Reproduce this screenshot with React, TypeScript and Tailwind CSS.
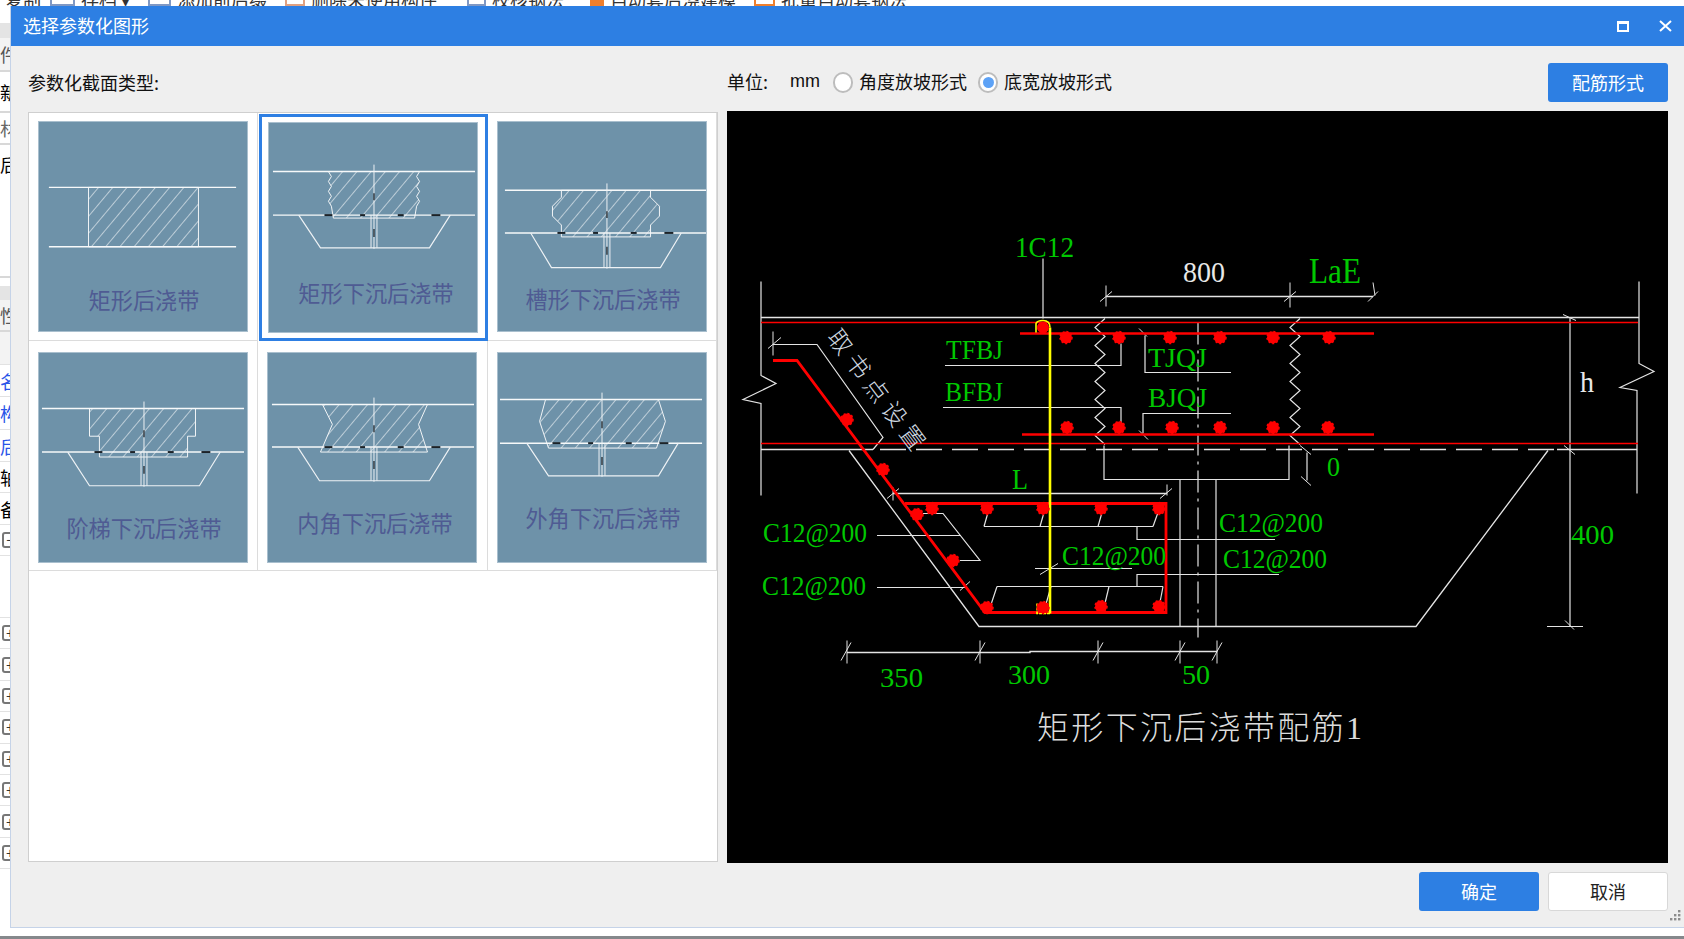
const cjk = "font-['Noto_Sans_CJK_SC',sans-serif]";
const serif = "font-['Liberation_Serif','Noto_Sans_CJK_SC',serif]";

type Thumb = {
  id: string;
  label: string;
  labelX: number;
  labelY: number;
  top: number;
  mid: number;
  cx: number;
  left: number;
  right: number;
  trap?: number[];
  shape: string;
  selected?: boolean;
  row2?: boolean;
};

const thumbs: Thumb[] = [
  { id: 'a', label: '矩形后浇带', labelX: 106, labelY: 181, top: 66, mid: 126, cx: 0, left: 10, right: 199, shape: '50,66 161,66 161,126 50,126' },
  {
    id: 'b', label: '矩形下沉后浇带', labelX: 108, labelY: 173, top: 49, mid: 93, cx: 106, left: 4, right: 208,
    trap: [30, 52, 162, 183, 126], selected: true,
    shape: '60,49 152,49 149,54 152,59 149,64 152,69 149,74 152,79 149,84 147,96 65,96 63,84 60,79 63,74 60,69 63,64 60,59 63,54',
  },
  {
    id: 'c', label: '槽形下沉后浇带', labelX: 106, labelY: 180, top: 69, mid: 112, cx: 110, left: 7, right: 210,
    trap: [33, 54, 164, 185, 147],
    shape: '64,69 154,69 154,76 163,85 163,95 154,104 154,116 64,116 64,104 55,95 55,85 64,76',
  },
  {
    id: 'd', label: '阶梯下沉后浇带', labelX: 106, labelY: 178, top: 56, mid: 100, cx: 106, left: 3, right: 207, row2: true,
    trap: [29, 51, 162, 183, 134],
    shape: '51,56 158,56 158,84 150,84 150,105 61,105 61,84 51,84',
  },
  {
    id: 'e', label: '内角下沉后浇带', labelX: 108, labelY: 173, top: 52, mid: 95, cx: 107, left: 4, right: 208, row2: true,
    trap: [30, 52, 163, 184, 129],
    shape: '55,52 161,52 152,72 161,100 53,100 65,72',
  },
  {
    id: 'f', label: '外角下沉后浇带', labelX: 106, labelY: 168, top: 47, mid: 91, cx: 105, left: 2, right: 206, row2: true,
    trap: [29, 51, 162, 182, 124],
    shape: '48,47 162,47 169,69 160,96 51,96 42,69',
  },
];

function ThumbImage({ t }: { t: Thumb }) {
  const { id, top, mid, cx, left, right, trap } = t;
  return (
    <svg viewBox="0 0 210 211" className="w-[210px] h-[211px] bg-[#6e92a9] border border-[#a9bfce] shrink-0">
      <defs>
        <pattern id={`hatch-${id}`} width="11" height="11" patternUnits="userSpaceOnUse" patternTransform="rotate(40)">
          <line x1="0" y1="0" x2="0" y2="11" stroke="#fff" strokeWidth="1.1" />
        </pattern>
      </defs>
      <polygon points={t.shape} fill={`url(#hatch-${id})`} stroke="#f2f5f7" strokeWidth="1" />
      <line x1={left} y1={top} x2={right} y2={top} stroke="#f7f9fa" strokeWidth="1.5" />
      <line x1={left} y1={mid} x2={right} y2={mid} stroke="#f7f9fa" strokeWidth="1.5" />
      {trap && (
        <>
          <polyline points={`${trap[0]},${mid} ${trap[1]},${trap[4]} ${trap[2]},${trap[4]} ${trap[3]},${mid}`} fill="none" stroke="#eef2f5" strokeWidth="1.2" />
          <line x1={cx} y1={top - 7} x2={cx} y2={trap[4] + 1} stroke="#eef2f5" strokeWidth="1" />
          <line x1={cx - 3} y1={mid} x2={cx - 3} y2={trap[4]} stroke="#eef2f5" strokeWidth="1" />
          <line x1={cx + 3} y1={mid} x2={cx + 3} y2={trap[4]} stroke="#eef2f5" strokeWidth="1" />
          <g stroke="#1b2228" strokeWidth="2">
            <line x1={cx - 50} y1={mid} x2={cx - 42} y2={mid} />
            <line x1={cx - 14} y1={mid} x2={cx - 9} y2={mid} />
            <line x1={cx + 24} y1={mid} x2={cx + 30} y2={mid} />
            <line x1={cx + 58} y1={mid} x2={cx + 67} y2={mid} />
          </g>
          <g stroke="#1b2228" strokeWidth="1.3">
            <line x1={cx} y1={mid - 22} x2={cx} y2={mid - 15} />
            <line x1={cx} y1={mid + 14} x2={cx} y2={mid + 22} />
          </g>
        </>
      )}
      <text x={t.labelX} y={t.labelY + 8} textAnchor="middle" fontSize="22.4" fill="#4f5b93" className={cjk}>
        {t.label}
      </text>
    </svg>
  );
}

function zigzag(x1: number, x2: number, y1: number, y2: number, step: number) {
  const pts: string[] = [];
  let i = 0;
  for (let y = y1; y <= y2; y += step) {
    pts.push(`${i % 2 === 0 ? x2 : x1},${y.toFixed(1)}`);
    i++;
  }
  return pts.join(' ');
}

const ticks = [
  [1106, 285, 1106, 306], [1100, 301, 1112, 291],
  [1290, 282, 1290, 307], [1284, 301, 1296, 291],
  [1373, 282, 1375, 295], [1368, 301, 1378, 291],
  [773, 331, 773, 355], [768, 348, 781, 337],
  [893, 487, 893, 500], [887, 498, 899, 488],
  [1167, 484, 1167, 495], [1160, 498, 1172, 488],
  [847, 640, 847, 663], [841, 660, 851, 642],
  [980, 640, 980, 663], [975, 660, 985, 642],
  [1098, 640, 1098, 663], [1093, 660, 1103, 642],
  [1180, 640, 1180, 663], [1175, 660, 1185, 642],
  [1217, 640, 1217, 663], [1212, 660, 1222, 642],
  [1139, 328, 1147, 336], [1139, 430, 1148, 439],
  [1563, 314, 1576, 320], [1564, 445, 1575, 454],
  [1300, 445, 1311, 454], [1301, 476, 1311, 485],
  [1565, 620, 1574, 629], [960, 590, 970, 581], [1040, 574, 1058, 563],
];

const topDots = [1066, 1119, 1170, 1220, 1273, 1329];
const bottomDots = [1067, 1119, 1172, 1220, 1273, 1328];
const frameDots = [
  [932, 508], [987, 508], [1043, 508], [1101, 508], [1159, 508],
  [847, 419], [883, 469], [917, 514], [953, 560],
  [987, 607], [1043, 607], [1101, 606], [1159, 606],
];

const greenLabels: [string, number, number, number, number][] = [
  ['1C12', 1015, 256, 59, 30],
  ['LaE', 1309, 282, 52, 36],
  ['TFBJ', 946, 358, 57, 28],
  ['BFBJ', 945, 400, 58, 28],
  ['TJQJ', 1148, 366, 59, 28],
  ['BJQJ', 1148, 406, 59, 28],
  ['L', 1012, 488, 16, 30],
  ['0', 1327, 475, 13, 28],
  ['400', 1571, 543, 43, 28],
  ['C12@200', 763, 541, 104, 27],
  ['C12@200', 762, 594, 104, 27],
  ['C12@200', 1062, 564, 104, 27],
  ['C12@200', 1219, 531, 104, 27],
  ['C12@200', 1223, 567, 104, 27],
  ['350', 880, 686, 43, 28],
  ['300', 1008, 683, 42, 28],
  ['50', 1182, 683, 28, 28],
];

function Drawing() {
  return (
    <svg viewBox="727 111 941 751" className="w-full h-full bg-black block">
      <g stroke="#e4e4e4" strokeWidth="1.2" fill="none">
        <line x1="761" y1="317" x2="1639" y2="317" strokeWidth="1.5" />
        <polyline points="761,281 761,375 776,383 743,399 761,403 761,495" />
        <polyline points="1639,281 1639,363 1654,371 1620,387 1637,390 1637,493" />
        <line x1="761" y1="449" x2="873" y2="449" strokeWidth="1.5" />
        <line x1="880" y1="449" x2="1557" y2="449" strokeWidth="1.5" strokeDasharray="26 10" />
        <line x1="1557" y1="449" x2="1637" y2="449" strokeWidth="1.5" />
        <line x1="1106" y1="296" x2="1373" y2="296" strokeWidth="1.5" />
        <line x1="1043" y1="258" x2="1043" y2="318" />
        <polyline points={zigzag(1095, 1105, 318, 445, 9)} />
        <polyline points={zigzag(1290, 1300, 318, 445, 9)} />
        <polyline points="945,365 1121,365 1121,343" />
        <polyline points="943,407 1121,407 1121,423" />
        <polyline points="1145,335 1145,372 1231,372" />
        <polyline points="1143,433 1143,413 1231,413" />
        <line x1="1198" y1="322" x2="1198" y2="637" strokeDasharray="22 6 3 6" />
        <polyline points="1104,445 1104,479 1289,479 1289,445" />
        <line x1="1180" y1="479" x2="1180" y2="626" />
        <line x1="1216" y1="479" x2="1216" y2="626" />
        <polyline points="849,450 979,626 1416,626 1548,450" strokeWidth="1.3" />
        <line x1="1570" y1="317" x2="1570" y2="626" />
        <line x1="1547" y1="626" x2="1583" y2="626" />
        <line x1="893" y1="493" x2="1167" y2="493" strokeWidth="1.4" />
        <polyline points="773,344 817,344 883,437 873,449" />
        <polyline points="923,513 943,513 980,560 960,560" />
        <line x1="877" y1="535" x2="961" y2="535" />
        <line x1="877" y1="587" x2="965" y2="587" />
        <line x1="984" y1="526" x2="1153" y2="526" />
        <line x1="984" y1="526" x2="988" y2="512" />
        <line x1="1040" y1="526" x2="1044" y2="512" />
        <line x1="1098" y1="526" x2="1102" y2="512" />
        <line x1="1153" y1="526" x2="1158" y2="512" />
        <polyline points="1137,526 1137,539 1275,539" />
        <line x1="997" y1="586" x2="1163" y2="586" />
        <line x1="997" y1="586" x2="990" y2="607" />
        <line x1="1051" y1="586" x2="1045" y2="607" />
        <line x1="1109" y1="586" x2="1104" y2="607" />
        <line x1="1163" y1="586" x2="1159" y2="607" />
        <polyline points="1137,586 1137,574 1279,574" />
        <line x1="1035" y1="568" x2="1132" y2="568" />
        <polyline points="847,652 1030,652 1030,651 1217,651" strokeWidth="1.4" />
        <line x1="1307" y1="452" x2="1307" y2="480" />
        {ticks.map((t, i) => (
          <line key={i} x1={t[0]} y1={t[1]} x2={t[2]} y2={t[3]} strokeWidth="1" />
        ))}
      </g>

      <g stroke="#ff0000" fill="none">
        <line x1="761" y1="322" x2="1638" y2="322" strokeWidth="1.4" />
        <line x1="761" y1="443" x2="1638" y2="443" strokeWidth="1.4" />
        <line x1="1020" y1="333" x2="1374" y2="333" strokeWidth="2.6" />
        <line x1="1022" y1="434" x2="1374" y2="434" strokeWidth="2.6" />
        <polyline points="773,360 797,360 985,612 1166,612 1166,503 905,503" strokeWidth="2.8" />
      </g>

      <line x1="1050" y1="327" x2="1050" y2="613" stroke="#ffff00" strokeWidth="2.6" />
      <path d="M1036 332 V323 Q1037 320 1043 320 Q1050 320 1050 327" fill="none" stroke="#ffff00" strokeWidth="1.6" />
      <path d="M1037 603 V613 H1050" fill="none" stroke="#ffff00" strokeWidth="1.6" strokeDasharray="3 1" />

      <g fill="#ff0000" stroke="#ff0000">
        <circle cx="1043" cy="327" r="5.5" />
        {topDots.map((x) => (
          <circle key={x} cx={x} cy="337" r="6" strokeWidth="1.5" strokeDasharray="2 2" />
        ))}
        {bottomDots.map((x) => (
          <circle key={x} cx={x} cy="427" r="6" strokeWidth="1.5" strokeDasharray="2 2" />
        ))}
        {frameDots.map(([x, y]) => (
          <circle key={`${x}-${y}`} cx={x} cy={y} r="6" strokeWidth="1.5" strokeDasharray="2 2" />
        ))}
      </g>

      {greenLabels.map(([text, x, y, w, size], i) => (
        <text key={i} x={x} y={y} fontSize={size} textLength={w} lengthAdjust="spacingAndGlyphs" fill="#00c800" className={serif}>
          {text}
        </text>
      ))}
      <text x="1183" y="281" fontSize="29" textLength="42" lengthAdjust="spacingAndGlyphs" fill="#e8e8e8" className={serif}>
        800
      </text>
      <text x="1580" y="391" fontSize="30" textLength="14" lengthAdjust="spacingAndGlyphs" fill="#e8e8e8" className={serif}>
        h
      </text>
      <text x="0" y="0" fontSize="24" fontWeight="300" textLength="144" transform="translate(826 337) rotate(53)" fill="#cfd8e0" className={serif}>
        取书点设置
      </text>
      <text x="1037" y="738" fontSize="32" fontWeight="300" textLength="325" fill="#dcdcdc" className={serif}>
        矩形下沉后浇带配筋1
      </text>
    </svg>
  );
}

const sideRows: { h: string; text?: string; cls?: string }[] = [
  { h: 'h-[17px]' },
  { h: 'h-[15px]', cls: 'bg-[#e4e4e4]' },
  { h: 'h-[34px]', text: '件', cls: 'border-b-2 border-[#d8d8d8] bg-[#f3f3f3] text-[#555]' },
  { h: 'h-[41px]', text: '新', cls: 'border-b-2 border-[#d8d8d8] text-black' },
  { h: 'h-[32px]', text: '材', cls: 'border-b-2 border-[#d8d8d8] text-[#666]' },
  { h: 'h-[133px]', text: '后', cls: 'border-b-2 border-[#d8d8d8] text-black items-start' },
  { h: 'h-[8px]' },
  { h: 'h-[14px]', cls: 'bg-[#e4e4e4]' },
  { h: 'h-[32px]', text: '性', cls: 'border-b-2 border-[#d8d8d8] bg-[#f3f3f3] text-[#555]' },
  { h: 'h-[33px]', cls: 'border-b border-[#e2e2e2] bg-[#f3f3f3]' },
  { h: 'h-[32px]', text: '名', cls: 'border-b border-[#e2e2e2] text-[#2a55e8]' },
  { h: 'h-[33px]', text: '构', cls: 'border-b border-[#e2e2e2] text-[#2a55e8]' },
  { h: 'h-[32px]', text: '后', cls: 'border-b border-[#e2e2e2] text-[#2a55e8]' },
  { h: 'h-[31px]', text: '轴', cls: 'border-b border-[#e2e2e2] text-black' },
  { h: 'h-[32px]', text: '备', cls: 'border-b border-[#e2e2e2] text-black' },
];

const toolbarItems: { text: string; ml: string; icon: string; w: string }[] = [
  { text: '复制', ml: 'ml-[5px]', icon: '', w: 'w-[36px]' },
  { text: '存档 ▾', ml: 'ml-[9px]', icon: 'w-[25px] border-[#7f98c4]', w: 'w-[57px]' },
  { text: '添加前后缀', ml: 'ml-[10px]', icon: 'w-[23px] border-[#7f98c4]', w: 'w-[90px]' },
  { text: '删除未使用构件', ml: 'ml-[18px]', icon: 'w-[20px] border-[#e0a080]', w: 'w-[126px]' },
  { text: '校核钢法', ml: 'ml-[30px]', icon: 'w-[19px] border-[#7f98c4]', w: 'w-[72px]' },
  { text: '自动套后浇建模', ml: 'ml-[26px]', icon: 'w-[14px] bg-[#ef7f2d] border-[#ef7f2d]', w: 'w-[126px]' },
  { text: '批量自动套钢法', ml: 'ml-[18px]', icon: 'w-[21px] border-[#ef7f2d]', w: 'w-[126px]' },
];

function Square({ sign }: { sign: string }) {
  return (
    <div className="w-[16px] h-[16px] ml-[2px] rounded-[3px] border-2 border-[#777] bg-white flex items-center justify-center text-[14px] leading-none text-[#333] font-['Liberation_Sans',sans-serif] shrink-0">
      {sign}
    </div>
  );
}

function Backdrop() {
  return (
    <div className="w-[1684px] h-[939px] flex flex-col bg-white">
      <div className={`h-[6px] overflow-hidden flex ${cjk}`}>
        {toolbarItems.map((item) => (
          <div key={item.text} className={`${item.ml} flex items-end h-[6px] shrink-0 gap-[6px]`}>
            {item.icon && <span className={`${item.icon} h-[6px] border-x-2 border-b-2 shrink-0`} />}
            <span className={`${item.w} text-[18px] leading-[18px] text-[#333] mb-[-2px] whitespace-nowrap`}>{item.text}</span>
          </div>
        ))}
      </div>
      <div className="flex-1 w-[10px] overflow-hidden flex flex-col">
        {sideRows.map((r, i) => (
          <div key={i} className={`${r.h} shrink-0 flex items-center overflow-hidden text-[18px] leading-none ${cjk} ${r.cls ?? ''}`}>
            {r.text && <span className={`shrink-0 ${r.h === 'h-[133px]' ? 'mt-[10px]' : ''}`}>{r.text}</span>}
          </div>
        ))}
        <div className="h-[31px] shrink-0 border-b border-[#e2e2e2] flex items-center">
          <Square sign="−" />
        </div>
        <div className="h-[62px] shrink-0 border-b border-[#e2e2e2]" />
        {[0, 1, 2, 3, 4, 5, 6, 7].map((i) => (
          <div key={i} className="h-[31.4px] shrink-0 border-b border-[#e2e2e2] flex items-center">
            <Square sign="+" />
          </div>
        ))}
      </div>
      <div className="h-[3px] bg-[#85888c]" />
    </div>
  );
}

function Radio({ checked }: { checked?: boolean }) {
  return (
    <span className="w-[20px] h-[21px] rounded-full border-2 border-[#bdbdbd] bg-white flex items-center justify-center shrink-0">
      {checked && <span className="w-[11px] h-[11px] rounded-full bg-[#5da2f6]" />}
    </span>
  );
}

export default function App() {
  return (
    <div className={`relative w-[1684px] h-[939px] overflow-hidden ${cjk}`}>
      <Backdrop />

      <div className="absolute left-[10px] top-[6px] w-[1674px] h-[922px] flex flex-col bg-[#efefef] border-l border-b border-[#c5d3e8]">
        <div className="h-[40px] shrink-0 bg-[#2d7fe3] flex items-center pl-[12px] pr-[12px] text-white">
          <span className="text-[18px] leading-none pb-[2px]">选择参数化图形</span>
          <div className="ml-auto w-[12px] h-[11px] border-x-2 border-b-2 border-t-[3px] border-white" />
          <svg viewBox="0 0 13 12" className="ml-[30px] w-[13px] h-[12px]">
            <path d="M1 1 L12 11 M12 1 L1 11" stroke="#fff" strokeWidth="2" />
          </svg>
        </div>

        <div className="flex-1 pl-[17px] pr-[15px] flex flex-col relative">
          <div className="flex gap-[9px] mt-[17px]">
            <div className="w-[690px] shrink-0">
              <div className="h-[39px] flex items-center text-[18px] text-[#111] mb-[10px]">参数化截面类型:</div>
              <div className="h-[750px] border border-[#cfcfcf] bg-white">
                <div className="grid grid-cols-3">
                  {thumbs.map((t) => (
                    <div
                      key={t.id}
                      className={
                        t.selected
                          ? 'h-[227px] mt-px ml-px pr-px pb-px flex items-center justify-center border-[3px] border-[#2e7fe3]'
                          : t.row2
                            ? 'h-[230px] pt-[3px] flex items-center justify-center border-r border-b border-[#dcdcdc]'
                            : 'h-[228px] flex items-center justify-center border-r border-b border-[#dcdcdc]'
                      }
                    >
                      <ThumbImage t={t} />
                    </div>
                  ))}
                </div>
              </div>
            </div>

            <div className="w-[941px] shrink-0">
              <div className="h-[39px] flex items-center text-[18px] text-[#111] mb-[9px]">
                <span className="pb-[2px]">单位:</span>
                <span className="ml-[22px] pb-[2px] font-['Liberation_Sans',sans-serif] text-[18px]">mm</span>
                <span className="ml-[13px]"><Radio /></span>
                <span className="ml-[6px] pb-[2px]">角度放坡形式</span>
                <span className="ml-[11px]"><Radio checked /></span>
                <span className="ml-[6px] pb-[2px]">底宽放坡形式</span>
                <button className="ml-auto w-[120px] h-[39px] rounded-[3px] bg-[#2d7fe3] text-white text-[18px]">配筋形式</button>
              </div>
              <div className="h-[752px]">
                <Drawing />
              </div>
            </div>
          </div>

          <div className="flex justify-end gap-[9px] mt-[9px] mr-[1px]">
            <button className="w-[120px] h-[39px] rounded-[3px] bg-[#2d7fe3] text-white text-[18px]">确定</button>
            <button className="w-[120px] h-[39px] rounded-[3px] bg-white border border-[#d8d8d8] text-[#222] text-[18px]">取消</button>
          </div>

          <svg viewBox="0 0 12 12" className="absolute right-[3px] bottom-[5px] w-[12px] h-[12px]">
            <g fill="#8c8c8c">
              <rect x="9" y="0" width="2.4" height="2.4" />
              <rect x="5" y="4" width="2.4" height="2.4" />
              <rect x="9" y="4" width="2.4" height="2.4" />
              <rect x="1" y="8" width="2.4" height="2.4" />
              <rect x="5" y="8" width="2.4" height="2.4" />
              <rect x="9" y="8" width="2.4" height="2.4" />
            </g>
          </svg>
        </div>
      </div>
    </div>
  );
}
